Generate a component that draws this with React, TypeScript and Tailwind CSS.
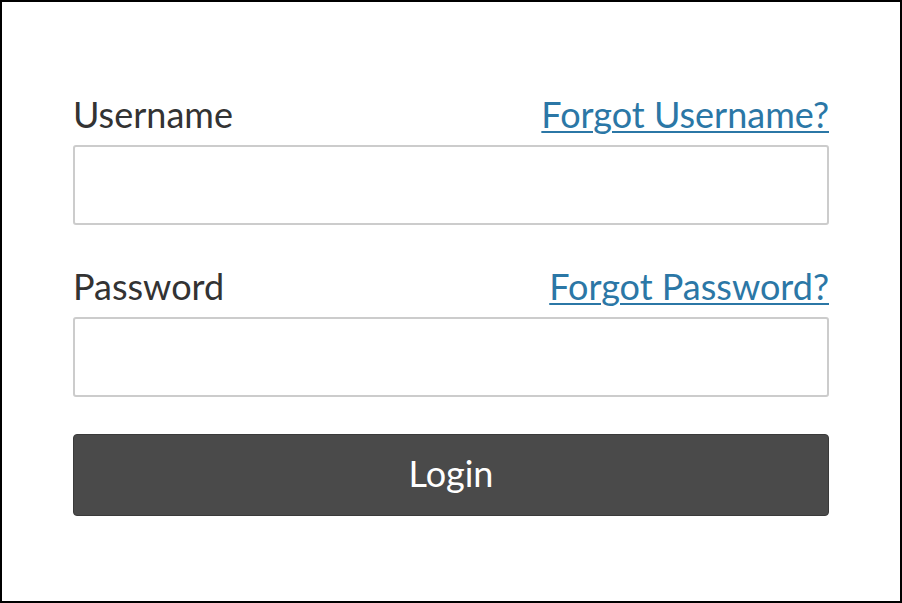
import React from "react";

export default function App() {
  return (
    <div className="w-[902px] h-[603px] border-2 border-black bg-white box-border" style={{ fontFamily: "Lato, 'Open Sans', sans-serif" }}>
      <div className="ml-[71px] pt-[91px] w-[756px]">
        <div className="flex items-baseline justify-between text-[36px] leading-[43px]">
          <label className="text-[#333333]">Username</label>
          <a href="#" className="text-[#2b77a6] underline decoration-2 underline-offset-[3px]">Forgot Username?</a>
        </div>
        <input type="text" className="mt-[9px] block w-full h-[80px] border-2 border-[#cccccc] rounded-[3px] bg-white outline-none" />
        <div className="mt-[40px] flex items-baseline justify-between text-[36px] leading-[43px]">
          <label className="text-[#333333]">Password</label>
          <a href="#" className="text-[#2b77a6] underline decoration-2 underline-offset-[3px]">Forgot Password?</a>
        </div>
        <input type="password" className="mt-[9px] block w-full h-[80px] border-2 border-[#cccccc] rounded-[3px] bg-white outline-none" />
        <button className="mt-[37px] block w-full h-[82px] pb-[4px] rounded-[4px] bg-[#4a4a4a] border border-[#3a3a3a] text-white text-[36px] leading-none">Login</button>
      </div>
    </div>
  );
}
